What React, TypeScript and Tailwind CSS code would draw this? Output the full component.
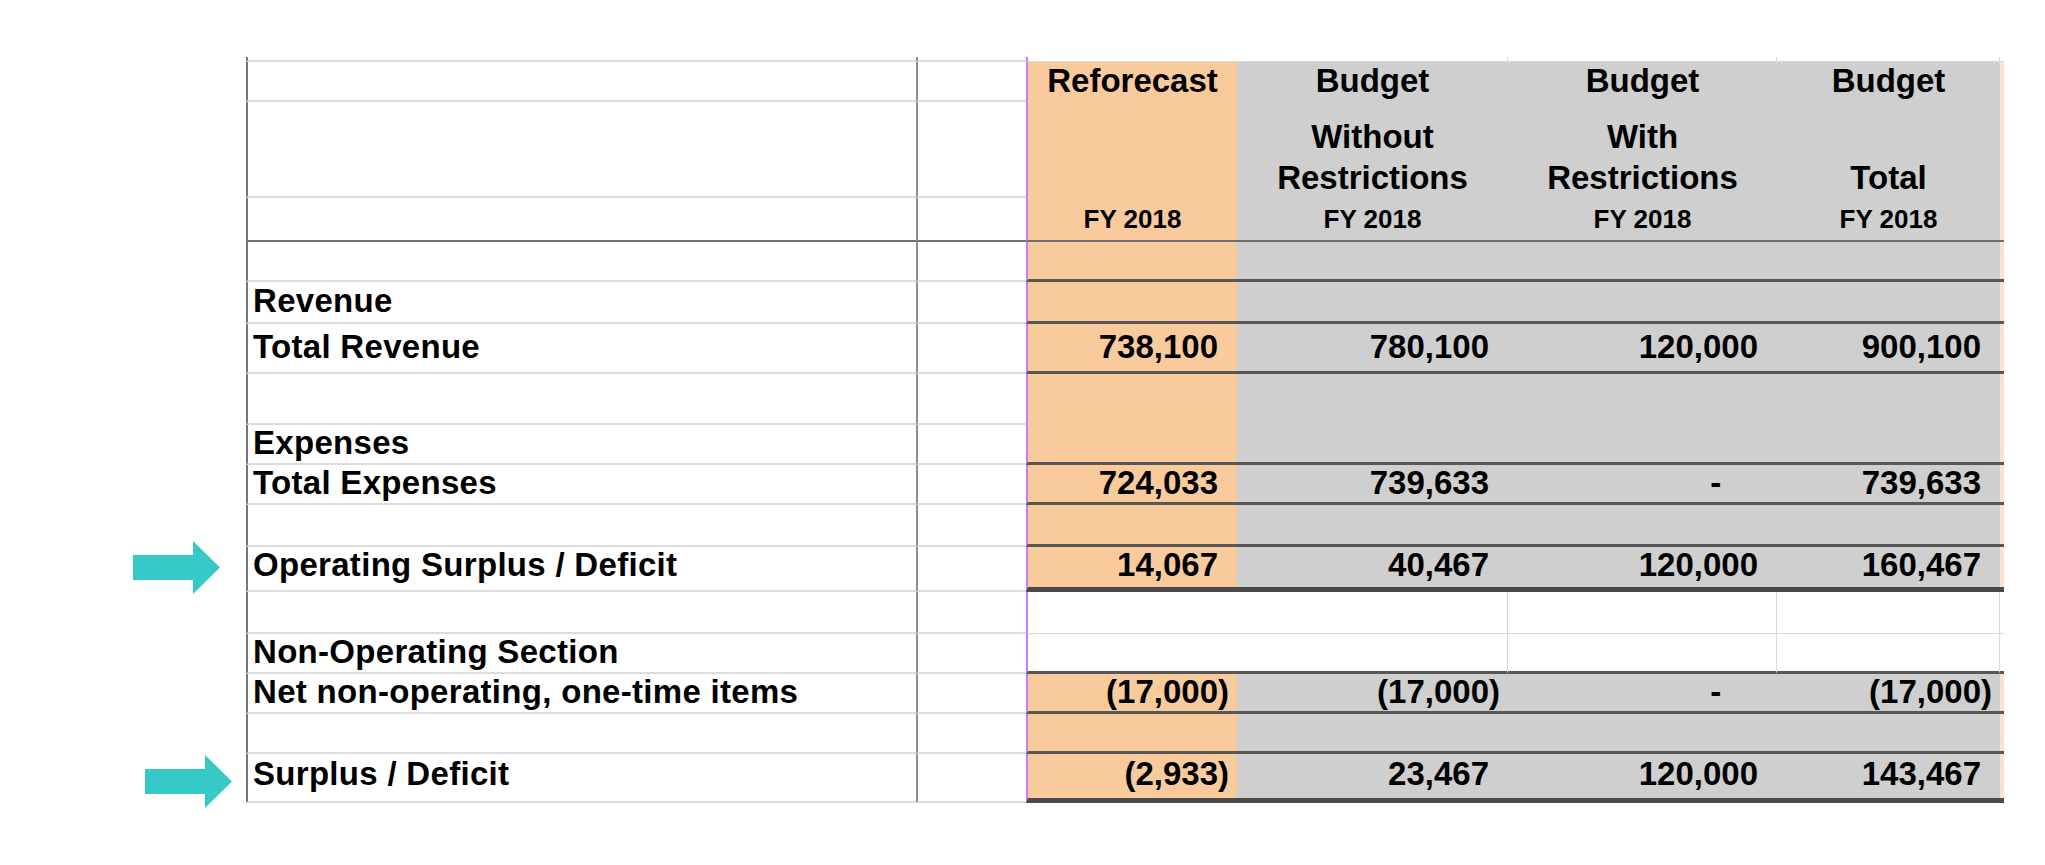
type Edge = 'none' | 'light' | 'mid' | 'dark' | 'thick'
type Fill = 'top' | 'color' | 'white'

type Row = {
  h: string
  label?: string
  vals?: string[]
  head?: 'h1' | 'h2' | 'h3'
  left: 'light' | 'dark'
  right: Edge
  fill: Fill
  arrow?: 'a' | 'b'
}

const rows: Row[] = [
  { h: 'h-[5px]', left: 'light', right: 'light', fill: 'top' },
  { h: 'h-[40px]', head: 'h1', left: 'light', right: 'none', fill: 'color' },
  { h: 'h-[96px]', head: 'h2', left: 'light', right: 'none', fill: 'color' },
  { h: 'h-[44px]', head: 'h3', left: 'dark', right: 'mid', fill: 'color' },
  { h: 'h-[40px]', left: 'light', right: 'dark', fill: 'color' },
  { h: 'h-[42px]', label: 'Revenue', left: 'light', right: 'dark', fill: 'color' },
  { h: 'h-[50px]', label: 'Total Revenue', vals: ['738,100', '780,100', '120,000', '900,100'], left: 'light', right: 'dark', fill: 'color' },
  { h: 'h-[51px]', left: 'light', right: 'none', fill: 'color' },
  { h: 'h-[40px]', label: 'Expenses', left: 'light', right: 'dark', fill: 'color' },
  { h: 'h-[40px]', label: 'Total Expenses', vals: ['724,033', '739,633', '-', '739,633'], left: 'light', right: 'dark', fill: 'color' },
  { h: 'h-[42px]', left: 'light', right: 'dark', fill: 'color' },
  { h: 'h-[45px]', label: 'Operating Surplus / Deficit', vals: ['14,067', '40,467', '120,000', '160,467'], left: 'light', right: 'thick', fill: 'color', arrow: 'a' },
  { h: 'h-[42px]', left: 'light', right: 'light', fill: 'white' },
  { h: 'h-[40px]', label: 'Non-Operating Section', left: 'light', right: 'dark', fill: 'white' },
  { h: 'h-[40px]', label: 'Net non-operating, one-time items', vals: ['(17,000)', '(17,000)', '-', '(17,000)'], left: 'light', right: 'dark', fill: 'color' },
  { h: 'h-[40px]', left: 'light', right: 'dark', fill: 'color' },
  { h: 'h-[49px]', label: 'Surplus / Deficit', vals: ['(2,933)', '23,467', '120,000', '143,467'], left: 'light', right: 'thick', fill: 'color', arrow: 'b' },
]

const rightEdge: Record<Edge, string> = {
  none: '',
  light: 'border-b border-b-[#d9d9d9]',
  mid: 'border-b-2 border-b-[#6f6f6f]',
  dark: 'border-b-[3px] border-b-[#575757]',
  thick: 'border-b-[5px] border-b-[#4b4b4b]',
}

const leftEdge = {
  light: 'border-b-2 border-b-[#dcdcdc]',
  dark: 'border-b-2 border-b-[#6f6f6f]',
}

const heads = {
  h1: [['Reforecast'], ['Budget'], ['Budget'], ['Budget']],
  h2: [[], ['Without', 'Restrictions'], ['With', 'Restrictions'], ['Total']],
  h3: [['FY 2018'], ['FY 2018'], ['FY 2018'], ['FY 2018']],
}

function Arrow() {
  return (
    <svg width="87" height="53" viewBox="0 0 87 53">
      <polygon points="0,14 60,14 60,0 87,26.5 60,53 60,39 0,39" fill="#35c9c8" />
    </svg>
  )
}

function Num({ v }: { v: string }) {
  if (v === '-') return <>-<span className="invisible">00)</span></>
  if (v.startsWith('(')) return <>{v}</>
  return <>{v}<span className="invisible">)</span></>
}

function Cells({ row }: { row: Row }) {
  const edge = rightEdge[row.right]
  const colored = row.fill === 'color'
  const orange = colored ? 'bg-[#f9cb9c]' : 'bg-white'
  const gray = colored ? 'bg-[#cfcfcf]' : 'bg-white border-r border-r-[#d9d9d9]'
  const widths = ['w-[211px]', 'w-[271px]', 'w-[269px]', 'w-[223px]']
  const pad = row.right === 'thick' ? 'pb-[5px]' : 'pb-[3px]'

  return (
    <>
      {widths.map((w, i) => {
        const bg = i === 0 ? `${orange} border-l-2 border-l-[#c77cf2]` : gray
        let content: React.ReactNode = null
        let align = `items-center justify-end pr-[8px] ${pad}`
        if (row.head === 'h1') {
          content = heads.h1[i][0]
          align = 'items-center justify-center pb-[4px]'
        } else if (row.head === 'h2') {
          content = (
            <div className="flex flex-col items-center">
              {heads.h2[i].map((t) => (
                <div key={t} className="leading-[41px]">{t}</div>
              ))}
            </div>
          )
          align = 'items-end justify-center'
        } else if (row.head === 'h3') {
          content = <span className="text-[26px]">{heads.h3[i][0]}</span>
          align = 'items-center justify-center'
        } else if (row.vals) {
          content = <Num v={row.vals[i]} />
        }
        return (
          <div key={i} className={`${w} shrink-0 flex ${align} ${bg} ${edge}`}>
            {content}
          </div>
        )
      })}
      <div className={`w-[4px] shrink-0 ${colored ? 'bg-[#fde2cf]' : 'bg-white'} ${edge}`} />
    </>
  )
}

export default function App() {
  return (
    <div className="min-h-screen w-[2045px] bg-white pt-[57px] font-['Liberation_Sans',Arial,sans-serif] text-[33px] font-bold text-black leading-none">
      {rows.map((row, idx) => (
        <div key={idx} className={`flex ${row.h}`}>
          <div className="w-[246px] shrink-0 flex items-center justify-end">
            {row.arrow === 'a' && (
              <div className="mr-[26px] mb-[4px]">
                <Arrow />
              </div>
            )}
            {row.arrow === 'b' && (
              <div className="mr-[14px] mt-[5px]">
                <Arrow />
              </div>
            )}
          </div>
          <div
            className={`w-[670px] shrink-0 flex items-center pl-[5px] tracking-[0.3px] border-l-2 border-l-[#767676] ${
              row.right === 'thick' ? 'pb-[8px]' : 'pb-[3px]'
            } ${leftEdge[row.left]}`}
          >
            {row.label}
          </div>
          <div className={`w-[110px] shrink-0 border-l-2 border-l-[#8e8e8e] ${leftEdge[row.left]}`} />
          <Cells row={row} />
        </div>
      ))}
    </div>
  )
}
